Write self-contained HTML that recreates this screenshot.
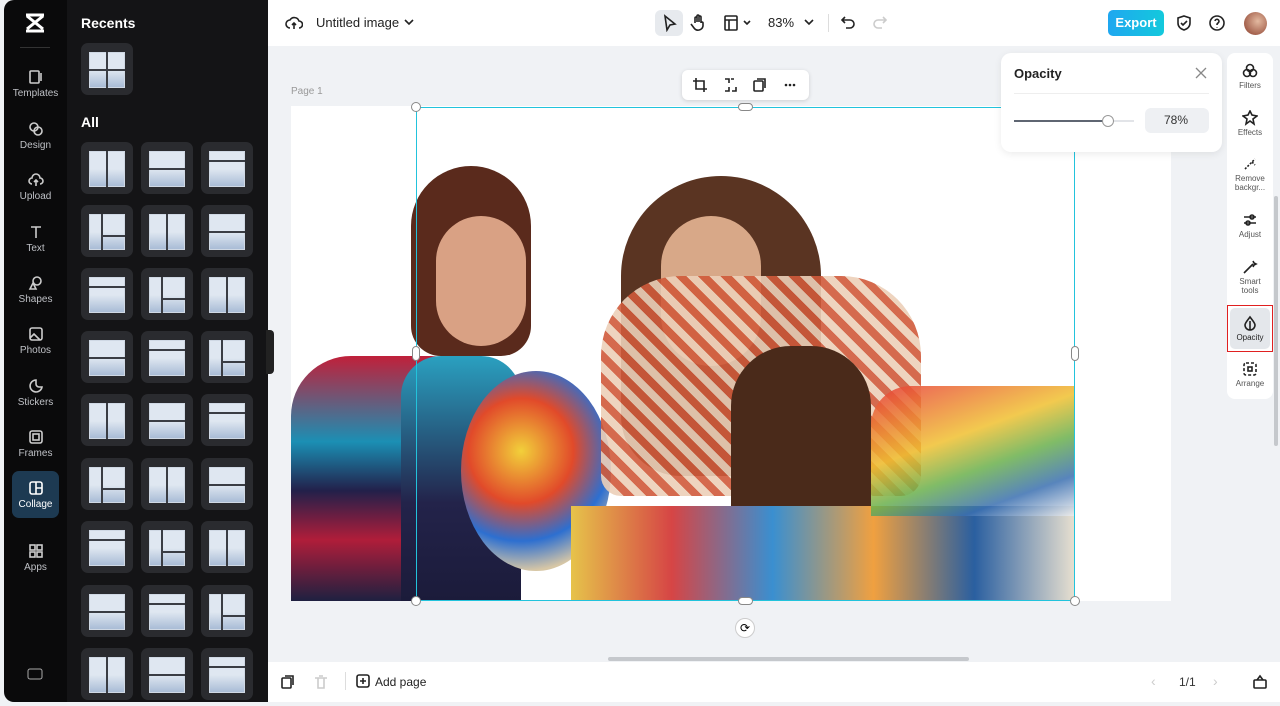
<!DOCTYPE html><html><head><style>
*{box-sizing:border-box;margin:0;padding:0}
body{width:1280px;height:706px;overflow:hidden;background:#f0f2f5;font-family:"Liberation Sans",sans-serif;position:relative}
.abs{position:absolute}
.rail{left:4px;top:0;width:63px;height:702px;background:#0a0a0b;border-radius:10px 0 0 10px}
.panel{left:67px;top:0;width:201px;height:702px;background:#141416}
.ri{position:absolute;left:4px;width:63px;text-align:center;color:#bfc1c6;font-size:10px}
.ri svg{display:block;margin:0 auto 3px}
.tile{position:absolute;width:52px;height:52px;background:#2a2b2f;border-radius:7px}
.tile i{position:absolute;left:8px;top:9px;width:36px;height:36px;background:linear-gradient(#dfe7f1 50%,#a9bcd6 100%);border:1px solid #cfd8e4}
.tile b{position:absolute;background:#3a3d44}
.top{left:268px;top:0;width:1012px;height:46px;background:#fff}
.bot{left:268px;top:662px;width:1012px;height:40px;background:#fff}
.ic{stroke:#222;fill:none;stroke-width:1.6}
.side{left:1227px;top:53px;width:46px;height:346px;background:#fff;border-radius:8px}
.si{position:absolute;left:0;width:46px;text-align:center;font-size:8px;color:#555;line-height:9px}
</style></head><body>
<div class="abs rail"></div>
<div class="abs panel"></div>
<svg class="abs" style="left:24px;top:13px" width="22" height="20" viewBox="0 0 22 20"><path d="M2 2h18M2 18h18M3 3l16 13M19 3L3 16" stroke="#fff" stroke-width="3" fill="none"/></svg>
<div class="abs" style="left:20px;top:47px;width:30px;height:1px;background:#333"></div>
<div class="ri" style="top:69px"><svg width="16" height="16" class="ic" style="stroke:#ccc"><rect x="2" y="2" width="9" height="12" rx="1"/><path d="M13 4v8"/></svg>Templates</div>
<div class="ri" style="top:121px"><svg width="16" height="16" class="ic" style="stroke:#ccc"><circle cx="6" cy="6" r="4"/><circle cx="10" cy="10" r="4"/></svg>Design</div>
<div class="ri" style="top:172px"><svg width="16" height="16" class="ic" style="stroke:#ccc"><path d="M4 12a3 3 0 010-6 4 4 0 018 0 3 3 0 010 6M8 14V8M6 10l2-2 2 2"/></svg>Upload</div>
<div class="ri" style="top:224px"><svg width="16" height="16" class="ic" style="stroke:#ccc"><path d="M3 3h10M8 3v11"/></svg>Text</div>
<div class="ri" style="top:275px"><svg width="16" height="16" class="ic" style="stroke:#ccc"><circle cx="9" cy="6" r="4"/><path d="M2 14l3-6 3 6z"/></svg>Shapes</div>
<div class="ri" style="top:326px"><svg width="16" height="16" class="ic" style="stroke:#ccc"><rect x="2" y="2" width="12" height="12" rx="2"/><path d="M2 12l4-4 6 6"/></svg>Photos</div>
<div class="ri" style="top:378px"><svg width="16" height="16" class="ic" style="stroke:#ccc"><path d="M14 9A6 6 0 118 2v4a3 3 0 003 3z"/></svg>Stickers</div>
<div class="ri" style="top:429px"><svg width="16" height="16" class="ic" style="stroke:#ccc"><rect x="2" y="2" width="12" height="12" rx="2"/><rect x="5" y="5" width="6" height="6"/></svg>Frames</div>
<div class="abs" style="left:12px;top:471px;width:47px;height:47px;background:#1d3a52;border-radius:7px"></div>
<div class="ri" style="top:480px;color:#fff"><svg width="16" height="16" class="ic" style="stroke:#fff"><rect x="2" y="2" width="12" height="12" rx="2"/><path d="M8 2v12M8 8h6"/></svg>Collage</div>
<div class="ri" style="top:543px"><svg width="16" height="16" class="ic" style="stroke:#ccc"><rect x="2" y="2" width="5" height="5"/><rect x="9" y="2" width="5" height="5"/><rect x="2" y="9" width="5" height="5"/><rect x="9" y="9" width="5" height="5"/></svg>Apps</div>
<svg class="abs" style="left:27px;top:667px" width="16" height="14"><rect x="1" y="2" width="14" height="10" rx="2" stroke="#aaa" fill="none"/></svg>
<div class="abs" style="left:81px;top:15px;color:#fff;font-weight:bold;font-size:14px">Recents</div>
<div class="abs" style="left:81px;top:114px;color:#fff;font-weight:bold;font-size:14px">All</div>
<div class="tile" style="left:81px;top:43px"><i></i><b style="left:25px;top:9px;width:2px;height:36px"></b><b style="left:8px;top:26px;width:36px;height:2px"></b></div>
<div id="g"></div>
<script>
var s='',xs=[81,141,201],ys=[142,205,268,331,394,458,521,585,648];
ys.forEach(function(y,r){xs.forEach(function(x,c){var k=(r*3+c)%4;var d=k==0?'<b style="left:25px;top:9px;width:2px;height:36px"></b>':k==1?'<b style="left:8px;top:26px;width:36px;height:2px"></b>':k==2?'<b style="left:8px;top:18px;width:36px;height:2px"></b>':'<b style="left:20px;top:9px;width:2px;height:36px"></b><b style="left:20px;top:30px;width:24px;height:2px"></b>';s+='<div class="tile" style="left:'+x+'px;top:'+y+'px"><i></i>'+d+'</div>'})});
document.getElementById('g').innerHTML=s;
</script>
<div class="abs" style="left:266px;top:330px;width:8px;height:44px;background:#222;border-radius:0 4px 4px 0"></div>
<div class="abs top"></div>
<svg class="abs" style="left:285px;top:14px" width="18" height="18"><path class="ic" d="M5 14a4 4 0 010-8 5 5 0 019 1 3 3 0 010 7M9 15V9M7 11l2-2 2 2"/></svg>
<div class="abs" style="left:316px;top:15px;font-size:13px;color:#222">Untitled image</div>
<svg class="abs" style="left:404px;top:18px" width="10" height="8"><path class="ic" d="M1 2l4 4 4-4"/></svg>
<div class="abs" style="left:655px;top:10px;width:28px;height:26px;background:#e7eaee;border-radius:6px"></div>
<svg class="abs" style="left:662px;top:14px" width="16" height="18"><path class="ic" d="M3 2l10 8-5 1-3 5z"/></svg>
<svg class="abs" style="left:690px;top:13px" width="18" height="20"><path class="ic" d="M5 10V5a1 1 0 012 0v4V3a1 1 0 012 0v6V4a1 1 0 012 0v6a1 1 0 012 0v3a5 5 0 01-9 2l-3-4"/></svg>
<svg class="abs" style="left:723px;top:15px" width="30" height="16"><rect class="ic" x="2" y="1" width="12" height="14" rx="1"/><path class="ic" d="M2 5h12M6 5v10M21 6l3 3 3-3"/></svg>
<div class="abs" style="left:768px;top:15px;font-size:13px;color:#222">83%</div>
<svg class="abs" style="left:804px;top:18px" width="10" height="8"><path class="ic" d="M1 2l4 4 4-4"/></svg>
<div class="abs" style="left:828px;top:14px;width:1px;height:18px;background:#ddd"></div>
<svg class="abs" style="left:840px;top:14px" width="18" height="18"><path class="ic" d="M5 3L2 6l3 3M2 6h8a4 4 0 010 8H6"/></svg>
<svg class="abs" style="left:870px;top:14px" width="18" height="18"><path class="ic" style="stroke:#ccc" d="M13 3l3 3-3 3M16 6H8a4 4 0 000 8h4"/></svg>
<div class="abs" style="left:1108px;top:10px;width:56px;height:26px;background:linear-gradient(90deg,#1fa7f0,#13c9dc);border-radius:5px;color:#fff;font-size:13px;font-weight:bold;text-align:center;line-height:26px">Export</div>
<svg class="abs" style="left:1175px;top:14px" width="18" height="18"><path class="ic" d="M9 2l6 2v5c0 4-3 6-6 7-3-1-6-3-6-7V4z"/><path class="ic" d="M6 9l2 2 4-4"/></svg>
<svg class="abs" style="left:1208px;top:14px" width="18" height="18"><circle class="ic" cx="9" cy="9" r="7"/><path class="ic" d="M7 7a2 2 0 113 2c-1 .5-1 1-1 2M9 13v.5"/></svg>
<div class="abs" style="left:1244px;top:12px;width:23px;height:23px;border-radius:50%;background:radial-gradient(circle at 60% 40%,#e3b9a0,#8a3c2a)"></div>
<div class="abs" style="left:291px;top:86px;font-size:10px;color:#999">Page 1</div>
<div class="abs" style="left:291px;top:106px;width:880px;height:495px;background:#fff"></div>
<div class="abs" style="left:291px;top:106px;width:784px;height:495px;overflow:hidden">
<div class="abs" style="left:0;top:250px;width:180px;height:245px;background:linear-gradient(180deg,#c0203a 0,#1b8fb4 35%,#22204a 55%,#b01d3a 75%,#1e2040 100%);border-radius:60px 40px 0 0"></div>
<div class="abs" style="left:120px;top:60px;width:120px;height:190px;background:#5a2a1c;border-radius:60px 60px 30px 30px"></div>
<div class="abs" style="left:145px;top:110px;width:90px;height:130px;background:#d9a184;border-radius:45px"></div>
<div class="abs" style="left:110px;top:250px;width:120px;height:245px;background:linear-gradient(#2aa0c0,#23234a 60%,#1b1b3a);border-radius:40px 40px 0 0"></div>
<div class="abs" style="left:170px;top:265px;width:150px;height:200px;background:radial-gradient(circle at 40% 40%,#f2d03a,#e14a2a 35%,#2d6fd0 60%,#d7c7a6 80%);border-radius:50%"></div>
<div class="abs" style="left:330px;top:70px;width:200px;height:300px;background:#5a3422;border-radius:100px 100px 60px 60px"></div>
<div class="abs" style="left:370px;top:110px;width:100px;height:150px;background:#d8a888;border-radius:50px"></div>
<div class="abs" style="left:310px;top:170px;width:320px;height:220px;background:repeating-linear-gradient(45deg,#d05a3a 0 8px,#eccfb8 8px 16px);border-radius:80px 80px 20px 20px;opacity:.9"></div>
<div class="abs" style="left:440px;top:240px;width:140px;height:260px;background:#4a2a1a;border-radius:60px"></div>
<div class="abs" style="left:280px;top:400px;width:504px;height:95px;background:linear-gradient(90deg,#e6c34a,#d64545,#3a8fd0,#f0a040,#2a5fa0,#e8e0d0)"></div>
<div class="abs" style="left:580px;top:280px;width:204px;height:130px;background:linear-gradient(160deg,#e83a3a,#f0c030 40%,#6ab04c 60%,#3a6fb0 80%,#eee);border-radius:40px 0 0 0;opacity:.85"></div>
</div>
<div class="abs" style="left:416px;top:107px;width:659px;height:494px;border:1.5px solid #22c3dc"></div>
<div class="abs" style="left:411px;top:102px;width:10px;height:10px;border-radius:50%;background:#fff;border:1px solid #888"></div>
<div class="abs" style="left:1070px;top:596px;width:10px;height:10px;border-radius:50%;background:#fff;border:1px solid #888"></div>
<div class="abs" style="left:411px;top:596px;width:10px;height:10px;border-radius:50%;background:#fff;border:1px solid #888"></div>
<div class="abs" style="left:738px;top:103px;width:15px;height:8px;border-radius:4px;background:#fff;border:1px solid #888"></div>
<div class="abs" style="left:738px;top:597px;width:15px;height:8px;border-radius:4px;background:#fff;border:1px solid #888"></div>
<div class="abs" style="left:412px;top:346px;width:8px;height:15px;border-radius:4px;background:#fff;border:1px solid #888"></div>
<div class="abs" style="left:1071px;top:346px;width:8px;height:15px;border-radius:4px;background:#fff;border:1px solid #888"></div>
<div class="abs" style="left:735px;top:618px;width:20px;height:20px;border-radius:50%;background:#fff;border:1px solid #ccc;font-size:12px;text-align:center;line-height:18px">⟳</div>
<div class="abs" style="left:682px;top:70px;width:127px;height:30px;background:#fff;border-radius:6px;box-shadow:0 1px 4px rgba(0,0,0,.15)"></div>
<svg class="abs" style="left:692px;top:77px" width="110" height="16"><path class="ic" d="M4 1v11h11M1 4h11v11"/><path class="ic" d="M33 2h4v4M33 14h4v-4M42 2h-3M44 10v4h-4"/><rect class="ic" x="62" y="4" width="9" height="10" rx="1"/><path class="ic" d="M65 2h8v9"/><circle cx="94" cy="8" r="1.3" fill="#222"/><circle cx="98" cy="8" r="1.3" fill="#222"/><circle cx="102" cy="8" r="1.3" fill="#222"/></svg>
<div class="abs" style="left:1001px;top:53px;width:221px;height:99px;background:#fff;border-radius:10px;box-shadow:0 2px 8px rgba(0,0,0,.08)"></div>
<div class="abs" style="left:1014px;top:66px;font-size:13px;font-weight:bold;color:#222">Opacity</div>
<svg class="abs" style="left:1195px;top:67px" width="12" height="12"><path d="M1 1l10 10M11 1L1 11" stroke="#888" stroke-width="1.3"/></svg>
<div class="abs" style="left:1014px;top:93px;width:195px;height:1px;background:#eee"></div>
<div class="abs" style="left:1014px;top:120px;width:120px;height:2px;background:#e2e4e8"></div>
<div class="abs" style="left:1014px;top:120px;width:94px;height:2px;background:#5f6672"></div>
<div class="abs" style="left:1102px;top:115px;width:12px;height:12px;border-radius:50%;background:#fff;border:1px solid #999"></div>
<div class="abs" style="left:1145px;top:108px;width:64px;height:25px;background:#eef0f3;border-radius:6px;font-size:12px;color:#333;line-height:25px;padding-left:19px">78%</div>
<div class="abs side"></div>
<div class="si" style="left:1227px;top:63px"><svg width="16" height="16"><circle class="ic" cx="8" cy="5" r="3.5"/><circle class="ic" cx="5" cy="10" r="3.5"/><circle class="ic" cx="11" cy="10" r="3.5"/></svg><br>Filters</div>
<div class="si" style="left:1227px;top:110px"><svg width="16" height="16"><path class="ic" d="M8 1l2 4 5 1-4 3 1 5-4-3-4 3 1-5-4-3 5-1z"/></svg><br>Effects</div>
<div class="si" style="left:1227px;top:156px"><svg width="16" height="16"><path class="ic" d="M3 13L13 3M10 6l3 3" stroke-dasharray="2 1.5"/></svg><br>Remove<br>backgr...</div>
<div class="si" style="left:1227px;top:212px"><svg width="16" height="16"><path class="ic" d="M2 5h12M2 11h12"/><circle cx="10" cy="5" r="2" fill="#fff" class="ic"/><circle cx="6" cy="11" r="2" fill="#fff" class="ic"/></svg><br>Adjust</div>
<div class="si" style="left:1227px;top:259px"><svg width="16" height="16"><path class="ic" d="M2 14l9-9M11 2l1 2 2 1-2 1-1 2"/></svg><br>Smart<br>tools</div>
<div class="abs" style="left:1227px;top:305px;width:46px;height:47px;border:1.5px solid #e02020"></div>
<div class="abs" style="left:1230px;top:308px;width:40px;height:41px;background:#e4e7eb;border-radius:5px"></div>
<div class="si" style="left:1227px;top:315px;color:#222"><svg width="16" height="16"><path class="ic" d="M8 2c3 4 5 6 5 8a5 5 0 01-10 0c0-2 2-4 5-8zM8 6v9"/></svg><br>Opacity</div>
<div class="si" style="left:1227px;top:361px"><svg width="16" height="16"><rect class="ic" x="2" y="2" width="12" height="12" rx="2" stroke-dasharray="3 2"/><rect class="ic" x="6" y="6" width="4" height="4"/></svg><br>Arrange</div>
<div class="abs" style="left:1274px;top:196px;width:4px;height:250px;background:#c5c8cc;border-radius:2px"></div>
<div class="abs" style="left:608px;top:657px;width:361px;height:4px;background:#c5c8cc;border-radius:2px"></div>
<div class="abs bot"></div>
<svg class="abs" style="left:280px;top:674px" width="16" height="16"><rect class="ic" x="2" y="4" width="9" height="10" rx="1"/><path class="ic" d="M5 2h8v9"/></svg>
<svg class="abs" style="left:313px;top:674px" width="16" height="16"><path class="ic" style="stroke:#ccc" d="M2 4h12M5 4v10h6V4M6 2h4"/></svg>
<div class="abs" style="left:345px;top:672px;width:1px;height:18px;background:#ddd"></div>
<svg class="abs" style="left:355px;top:673px" width="16" height="16"><rect class="ic" x="2" y="2" width="12" height="12" rx="2"/><path class="ic" d="M8 5v6M5 8h6"/></svg>
<div class="abs" style="left:375px;top:675px;font-size:12px;color:#222">Add page</div>
<div class="abs" style="left:1151px;top:673px;font-size:14px;color:#ccc">‹</div>
<div class="abs" style="left:1179px;top:675px;font-size:12px;color:#333">1/1</div>
<div class="abs" style="left:1213px;top:673px;font-size:14px;color:#ccc">›</div>
<svg class="abs" style="left:1252px;top:674px" width="16" height="16"><rect class="ic" x="2" y="6" width="12" height="8" rx="1"/><path class="ic" d="M5 6l3-4 3 4"/></svg>
</body></html>
